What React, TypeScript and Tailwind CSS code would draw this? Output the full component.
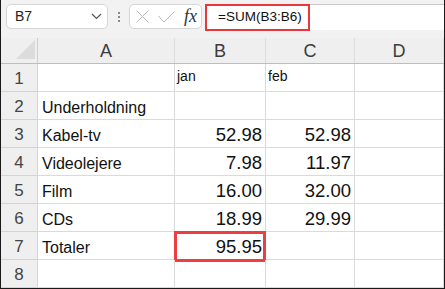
import React from "react";

const cols = ["A", "B", "C", "D"];
const colW = ["w-[137px]", "w-[91px]", "w-[89px]", "w-[89px]"];

type Row = [string, string, string, string];
const rows: Row[] = [
  ["", "jan", "feb", ""],
  ["Underholdning", "", "", ""],
  ["Kabel-tv", "52.98", "52.98", ""],
  ["Videolejere", "7.98", "11.97", ""],
  ["Film", "16.00", "32.00", ""],
  ["CDs", "18.99", "29.99", ""],
  ["Totaler", "95.95", "", ""],
  ["", "", "", ""],
];

const isNum = (s: string) => /^[0-9.]+$/.test(s);

export default function App() {
  return (
    <div
      className="w-[445px] h-[289px] overflow-hidden bg-white border-l border-r border-b border-[#1a1a1a] flex flex-col"
      style={{ fontFamily: '"Liberation Sans", Arial, sans-serif' }}
    >
      {/* formula bar */}
      <div className="h-[38px] shrink-0 bg-[#f2f2f2] flex items-start pt-[4px] pl-[5px]">
        <div className="w-[102px] h-[25px] bg-white border border-[#d6d6d6] rounded-[5px] flex items-center justify-between pl-[8px] pr-[5px]">
          <span className="text-[14px] text-[#222]">B7</span>
          <svg width="11" height="7" viewBox="0 0 11 7">
            <path d="M1 1 L5.5 5.5 L10 1" fill="none" stroke="#555" strokeWidth="1.2" />
          </svg>
        </div>
        <div className="w-[21px] h-[25px] flex flex-col items-center justify-center gap-[2px]">
          <div className="w-[2px] h-[2px] bg-[#8a8a8a]" />
          <div className="w-[2px] h-[2px] bg-[#8a8a8a]" />
          <div className="w-[2px] h-[2px] bg-[#8a8a8a]" />
        </div>
        <div className="w-[73px] h-[25px] bg-white border border-[#d6d6d6] rounded-[5px] flex items-center pl-[6px]">
          <svg width="13" height="13" viewBox="0 0 13 13">
            <path d="M0.5 0.5 L12.5 12.5 M12.5 0.5 L0.5 12.5" stroke="#b8b8b8" strokeWidth="1" fill="none" />
          </svg>
          <svg width="17" height="12" viewBox="0 0 17 12" className="ml-[9px]">
            <path d="M0.5 5 L6 11 L16.5 0.5" stroke="#b8b8b8" strokeWidth="1" fill="none" />
          </svg>
          <span
            className="ml-[9px] text-[18px] italic text-[#333] leading-none relative top-[-1px]"
            style={{ fontFamily: '"Liberation Serif", "Times New Roman", serif' }}
          >
            fx
          </span>
        </div>
        <div className="ml-[3px] flex-1 h-[26px] bg-white border-t border-[#c8c8c8] relative flex items-center">
          <div className="absolute left-0 top-[-1px] w-[105px] h-[27px] border-2 border-[#e8383d]" />
          <span className="ml-[13px] text-[13.5px] text-[#111]">=SUM(B3:B6)</span>
        </div>
      </div>

      {/* column headers */}
      <div className="h-[26px] shrink-0 flex bg-[#efefef] border-b border-[#bdbdbd]">
        <div className="w-[37px] shrink-0 border-r border-[#cfcfcf] relative">
          <svg width="20" height="19" viewBox="0 0 20 19" className="absolute left-[15px] top-[2px]">
            <path d="M19 0 L19 19 L0 19 Z" fill="#dcdcdc" />
          </svg>
        </div>
        {cols.map((c, i) => (
          <div
            key={c}
            className={`${colW[i]} shrink-0 border-r border-[#dcdcdc] flex items-center justify-center text-[18px] text-[#3c3c3c] pt-[1px]`}
          >
            {c}
          </div>
        ))}
      </div>

      {/* rows */}
      {rows.map((r, ri) => (
        <div key={ri} className="h-[28px] shrink-0 flex">
          <div className="w-[37px] shrink-0 bg-[#efefef] border-r border-b border-[#d4d4d4] flex items-center justify-center text-[17px] text-[#444] pt-[3px]">
            {ri + 1}
          </div>
          {r.map((v, ci) => {
            const red = ri === 6 && ci === 1;
            const num = isNum(v);
            return (
              <div
                key={ci}
                className={`${colW[ci]} shrink-0 border-r border-b border-[#dadada] relative flex items-center ${
                  num ? "justify-end pr-[3px]" : "justify-start pl-[4px]"
                }`}
              >
                {red && <div className="absolute left-[-1px] top-[-1px] w-[92px] h-[31px] border-[3px] border-[#ef3e42]" />}
                <span
                  className={
                    num
                      ? "text-[18.5px] text-[#111] relative top-[1px]"
                      : ri === 0
                      ? "text-[14px] text-[#111] relative top-[-1px] left-[-2px]"
                      : "text-[16px] text-[#111] relative top-[2px]"
                  }
                >
                  {v}
                </span>
              </div>
            );
          })}
        </div>
      ))}
    </div>
  );
}
